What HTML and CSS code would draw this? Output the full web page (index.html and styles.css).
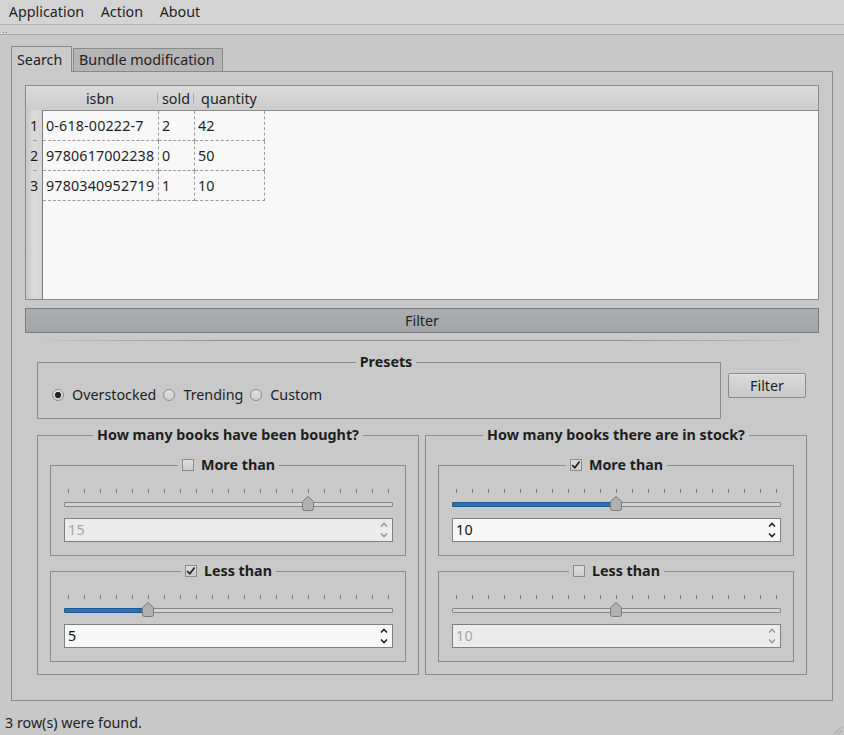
FILE: index.html
```html
<!DOCTYPE html>
<html>
<head>
<meta charset="utf-8">
<title>Bookstore</title>
<link rel="stylesheet" href="styles.css">
</head>
<body>
<div class="window">
  <nav class="menubar">
    <span class="menu-item">Application</span>
    <span class="menu-item">Action</span>
    <span class="menu-item">About</span>
  </nav>
  <div class="toolbar"><span class="grip"></span></div>
  <main class="central">
    <div class="tabbar">
      <div class="tab tab-active">Search</div>
      <div class="tab tab-bundle">Bundle modification</div>
    </div>
    <section class="pane">
      <div class="table">
        <div class="corner"></div>
        <div class="thead">
          <div class="th c-isbn sep">isbn</div>
          <div class="th c-sold sep">sold</div>
          <div class="th c-qty">quantity</div>
        </div>
        <div class="vheader">
          <div class="vh">1</div>
          <div class="vh">2</div>
          <div class="vh">3</div>
        </div>
        <div class="data">
          <div class="row"><div class="td c-isbn">0-618-00222-7</div><div class="td c-sold">2</div><div class="td c-qty">42</div></div>
          <div class="row"><div class="td c-isbn">9780617002238</div><div class="td c-sold">0</div><div class="td c-qty">50</div></div>
          <div class="row"><div class="td c-isbn">9780340952719</div><div class="td c-sold">1</div><div class="td c-qty">10</div></div>
        </div>
      </div>
      <div class="filterbar">Filter</div>
      <div class="separator"></div>
      <div class="lower">
        <div class="presets-row">
          <fieldset class="group presets">
            <legend>Presets</legend>
            <div class="radios">
              <label class="radio"><span class="radio-dot checked"></span>Overstocked</label>
              <label class="radio"><span class="radio-dot"></span>Trending</label>
              <label class="radio"><span class="radio-dot"></span>Custom</label>
            </div>
          </fieldset>
          <button class="btn">Filter</button>
        </div>
        <div class="groups">
          <fieldset class="group outer">
            <legend>How many books have been bought?</legend>
            <fieldset class="group inner">
              <legend><span class="legend-inner"><span class="chk"></span>More than</span></legend>
              <div class="slider" style="--pos:0.75">
                <div class="ticks"><i></i><i></i><i></i><i></i><i></i><i></i><i></i><i></i><i></i><i></i><i></i><i></i><i></i><i></i><i></i><i></i><i></i><i></i><i></i><i></i><i></i></div>
                <div class="groove"></div>
                <svg class="handle" viewBox="0 0 12 15"><path d="M0.5 5.5 L6 0.5 L11.5 5.5 V12.5 Q11.5 14.5 9.5 14.5 H2.5 Q0.5 14.5 0.5 12.5 Z"/></svg>
              </div>
              <div class="spin disabled"><span>15</span><svg class="arrows" viewBox="0 0 8 16"><polyline points="1,4.5 4,1.5 7,4.5"/><polyline points="1,11.5 4,14.5 7,11.5"/></svg></div>
            </fieldset>
            <fieldset class="group inner">
              <legend><span class="legend-inner"><span class="chk"><svg viewBox="0 0 12 12"><polyline points="2.2,6 4.8,8.8 9.6,2.4"/></svg></span>Less than</span></legend>
              <div class="slider" style="--pos:0.25">
                <div class="ticks"><i></i><i></i><i></i><i></i><i></i><i></i><i></i><i></i><i></i><i></i><i></i><i></i><i></i><i></i><i></i><i></i><i></i><i></i><i></i><i></i><i></i></div>
                <div class="groove"><div class="fill"></div></div>
                <svg class="handle" viewBox="0 0 12 15"><path d="M0.5 5.5 L6 0.5 L11.5 5.5 V12.5 Q11.5 14.5 9.5 14.5 H2.5 Q0.5 14.5 0.5 12.5 Z"/></svg>
              </div>
              <div class="spin"><span>5</span><svg class="arrows" viewBox="0 0 8 16"><polyline points="1,4.5 4,1.5 7,4.5"/><polyline points="1,11.5 4,14.5 7,11.5"/></svg></div>
            </fieldset>
          </fieldset>
          <fieldset class="group outer">
            <legend>How many books there are in stock?</legend>
            <fieldset class="group inner">
              <legend><span class="legend-inner"><span class="chk"><svg viewBox="0 0 12 12"><polyline points="2.2,6 4.8,8.8 9.6,2.4"/></svg></span>More than</span></legend>
              <div class="slider" style="--pos:0.5">
                <div class="ticks"><i></i><i></i><i></i><i></i><i></i><i></i><i></i><i></i><i></i><i></i><i></i><i></i><i></i><i></i><i></i><i></i><i></i><i></i><i></i><i></i><i></i></div>
                <div class="groove"><div class="fill"></div></div>
                <svg class="handle" viewBox="0 0 12 15"><path d="M0.5 5.5 L6 0.5 L11.5 5.5 V12.5 Q11.5 14.5 9.5 14.5 H2.5 Q0.5 14.5 0.5 12.5 Z"/></svg>
              </div>
              <div class="spin"><span>10</span><svg class="arrows" viewBox="0 0 8 16"><polyline points="1,4.5 4,1.5 7,4.5"/><polyline points="1,11.5 4,14.5 7,11.5"/></svg></div>
            </fieldset>
            <fieldset class="group inner">
              <legend><span class="legend-inner"><span class="chk"></span>Less than</span></legend>
              <div class="slider" style="--pos:0.5">
                <div class="ticks"><i></i><i></i><i></i><i></i><i></i><i></i><i></i><i></i><i></i><i></i><i></i><i></i><i></i><i></i><i></i><i></i><i></i><i></i><i></i><i></i><i></i></div>
                <div class="groove"></div>
                <svg class="handle" viewBox="0 0 12 15"><path d="M0.5 5.5 L6 0.5 L11.5 5.5 V12.5 Q11.5 14.5 9.5 14.5 H2.5 Q0.5 14.5 0.5 12.5 Z"/></svg>
              </div>
              <div class="spin disabled"><span>10</span><svg class="arrows" viewBox="0 0 8 16"><polyline points="1,4.5 4,1.5 7,4.5"/><polyline points="1,11.5 4,14.5 7,11.5"/></svg></div>
            </fieldset>
          </fieldset>
        </div>
      </div>
    </section>
  </main>
  <footer class="status">
    <span>3 row(s) were found.</span>
    <svg class="sizegrip" viewBox="0 0 11 11"><line x1="10.5" y1="2" x2="2" y2="10.5"/><line x1="10.5" y1="6" x2="6" y2="10.5"/></svg>
  </footer>
</div>
</body>
</html>
```
FILE: styles.css
```css
* { box-sizing: border-box; }
html, body { margin: 0; padding: 0; }
body {
  width: 844px;
  height: 735px;
  overflow: hidden;
  background: #c8c8c8;
  font-family: "Noto Sans", "Open Sans", sans-serif;
  font-size: 14.3px;
  line-height: 16px;
  color: #1f1f1f;
}
.window { display: flex; flex-direction: column; height: 735px; }

/* menu bar */
.menubar {
  height: 25px;
  background: #d4d4d4;
  border-bottom: 1px solid #adadad;
  display: flex;
  padding-left: 0.5px;
}
.menu-item { padding: 0 8.3px; line-height: 24px; }

.toolbar {
  height: 10px;
  background: #d1d1d1;
  border-bottom: 1px solid #a6a6a6;
}
.grip {
  display: block;
  margin: 7px 0 0 3px;
  width: 4px;
  height: 1px;
  background: linear-gradient(to right, #7a7a7a 1px, transparent 1px) 0 0 / 3px 1px repeat-x;
}

/* central */
.central {
  flex: 1;
  display: flex;
  flex-direction: column;
  padding: 11px 11px 10px;
}
.tabbar { display: flex; align-items: flex-end; height: 25px; }
.tab {
  border: 1px solid #8a8a8a;
  border-bottom: none;
  padding: 2px 0 4px 5px;
  line-height: 16px;
}
.tab-active {
  width: 61px;
  padding-top: 5px;
  padding-bottom: 4px;
  margin-bottom: -1px;
  background: #cacaca;
  position: relative;
  z-index: 1;
}
.tab-bundle {
  width: 150px;
  margin-left: 1px;
  background: #b5b5b5;
  padding-top: 3px;
  padding-bottom: 3px;
  padding-left: 5px;
}

.pane {
  flex: 1;
  border: 1px solid #8a8a8a;
  background: #c9c9c9;
  padding: 13px;
  display: flex;
  flex-direction: column;
}

/* table */
.table {
  height: 215px;
  border: 1px solid #8a8a8a;
  display: grid;
  grid-template-columns: 16px 1fr;
  grid-template-rows: 24px 1fr;
}
.corner { background: linear-gradient(#dbdbdb, #cccccc); }
.thead { display: flex; background: linear-gradient(#dbdbdb, #cccccc); }
.th { text-align: center; line-height: 26px; position: relative; }
.th.sep::after {
  content: "";
  position: absolute;
  right: 0;
  top: 7px;
  width: 1px;
  height: 10px;
  background: #a9a9a9;
}
.c-isbn { width: 116px; }
.c-sold { width: 36px; }
.c-qty { width: 70px; }

.vheader {
  padding-top: 1px;
  background: linear-gradient(to right, #c6c6c6, #dadada 45%, #d5d5d5);
}
.vh { height: 30px; line-height: 29px; text-align: center; position: relative; }
.vh:not(:last-child)::after {
  content: "";
  position: absolute;
  bottom: 0;
  left: 7px;
  width: 4px;
  height: 1px;
  background: #a0a0a0;
}
.data {
  border-left: 1px solid #7a7a7a;
  border-top: 1px solid #8a8a8a;
  background: #f8f8f8;
}
.row { display: flex; height: 30px; }
.td {
  border-right: 1px dashed #9c9c9c;
  border-bottom: 1px dashed #9c9c9c;
  padding-left: 3px;
  line-height: 29px;
  white-space: nowrap;
  letter-spacing: 0.15px;
}

.filterbar {
  margin-top: 8px;
  height: 25px;
  border: 1px solid #7c7c7c;
  background: linear-gradient(#acafb1, #a2a5a7);
  text-align: center;
  line-height: 23px;
  color: #222;
}
.separator {
  margin-top: 7px;
  height: 1px;
  background: linear-gradient(to right, rgba(140,140,140,0), #8e8e8e 25%, #8e8e8e 75%, rgba(140,140,140,0));
}

/* lower area */
.lower { padding: 0 12px; margin-top: 13px; }
.presets-row { display: flex; align-items: flex-start; gap: 7px; }

fieldset.group {
  margin: 0;
  min-width: 0;
  border: 1px solid #8a8a8a;
}
fieldset.group > legend {
  margin: 0 auto;
  padding: 0 4px;
  font-weight: bold;
  line-height: 16px;
  color: #1e1e1e;
}
.legend-inner {
  display: inline-flex;
  align-items: center;
  gap: 7px;
  vertical-align: top;
  height: 16px;
}

.presets { width: 684px; padding: 15px 0 13px 14px; }
.radios { display: flex; align-items: center; height: 20px; }
.radio { display: flex; align-items: center; margin-right: 7px; }
.radio-dot {
  width: 12px;
  height: 12px;
  border-radius: 50%;
  border: 1px solid #8c8c8c;
  background: linear-gradient(#e2e2e2, #cfcfcf);
  margin-right: 8px;
}
.radio-dot.checked {
  background: radial-gradient(circle, #222 0, #222 2.8px, transparent 3.4px), linear-gradient(#e2e2e2, #cfcfcf);
}

.btn {
  width: 78px;
  height: 25px;
  margin-top: 19px;
  padding: 0;
  border: 1px solid #8a8a8a;
  border-radius: 2px;
  background: linear-gradient(#dadada, #c8c8c8);
  box-shadow: inset 0 1px 0 #e6e6e6;
  font: inherit;
  color: #1f1f1f;
}

.groups {
  display: grid;
  grid-template-columns: 382px 382px;
  gap: 6px;
  margin-top: 8px;
}
.outer { padding: 14px 12px 12px; }
.inner { padding: 16px 12px 13px 13px; }
.inner + .inner { margin-top: 7px; }

.chk {
  width: 12px;
  height: 12px;
  border: 1px solid #8a8a8a;
  background: linear-gradient(#dedede, #cccccc);
  display: flex;
  align-items: center;
  justify-content: center;
}
.chk svg { width: 12px; height: 12px; flex: none; margin: -1px; }
.chk polyline { fill: none; stroke: #1e1e1e; stroke-width: 1.7; }

/* slider */
.slider { position: relative; height: 18px; }
.ticks {
  display: flex;
  justify-content: space-between;
  padding: 0 4px;
  height: 4px;
}
.ticks i { display: block; width: 1px; height: 4px; background: #7c7c7c; }
.groove {
  margin-top: 9px;
  height: 5px;
  border: 1px solid #868686;
  border-radius: 1px;
  background: #d3d3d3;
  position: relative;
}
.fill {
  position: absolute;
  left: -1px;
  top: -1px;
  bottom: -1px;
  width: calc(5px + var(--pos) * 320px);
  background: #2a72b3;
  border: 1px solid #1d5a91;
  border-radius: 1px;
}
.handle {
  position: absolute;
  top: 7px;
  left: calc(4px + var(--pos) * 320px - 6px);
  width: 12px;
  height: 15px;
}
.handle path { fill: #b1b1b1; stroke: #7a7a7a; stroke-width: 1; }

/* spin box */
.spin {
  margin-top: 11px;
  height: 24px;
  border: 1px solid #7f7f7f;
  background: #f7f7f7;
  display: flex;
  align-items: center;
  justify-content: space-between;
  padding: 0 4px 0 3px;
  line-height: 22px;
  color: #111;
  letter-spacing: 0.3px;
}
.spin.disabled { background: #ebebeb; color: #a5a5a5; }
.arrows { width: 8px; height: 16px; }
.arrows polyline { fill: none; stroke: #222; stroke-width: 1.6; }
.spin.disabled .arrows polyline { stroke: #9a9a9a; }

/* status */
.status {
  height: 24px;
  padding-left: 5px;
  line-height: 24px;
  display: flex;
  justify-content: space-between;
  align-items: flex-end;
}
.sizegrip { width: 11px; height: 11px; margin-right: 1px; }
.sizegrip line { stroke: #9a9a9a; stroke-width: 1; }
```
